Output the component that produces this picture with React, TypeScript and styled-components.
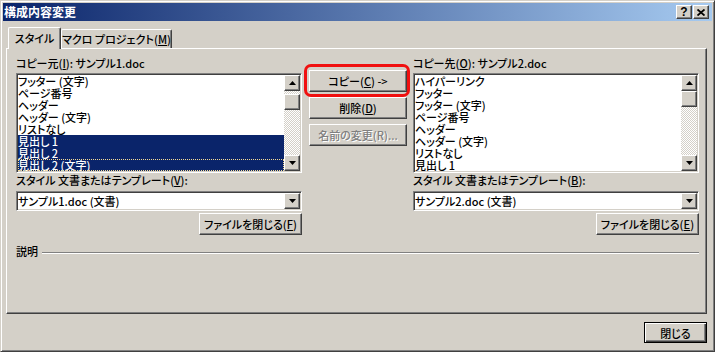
import React from 'react'
import styled, { createGlobalStyle, css } from 'styled-components'

const FACE = '#D4D0C8'
const SHADOW = '#808080'
const DARK = '#404040'
const HILITE = '#FFFFFF'
const NAVY = '#0A246A'

const GlobalStyle = createGlobalStyle`
  html, body {
    margin: 0;
    padding: 0;
    background: ${FACE};
  }
  body {
    font-family: 'Noto Sans CJK JP', 'Noto Sans', sans-serif;
    font-size: 11px;
    font-weight: 500;
    font-feature-settings: 'palt';
    color: #000;
  }
  * {
    box-sizing: border-box;
  }
`

const raised = css`
  border: 1px solid;
  border-color: ${HILITE} ${DARK} ${DARK} ${HILITE};
  box-shadow: inset -1px -1px ${SHADOW};
  background: ${FACE};
`

const sunken = css`
  border: 1px solid;
  border-color: ${SHADOW} ${HILITE} ${HILITE} ${SHADOW};
  box-shadow: inset 1px 1px ${DARK}, inset -1px -1px ${FACE};
  padding: 1px;
`

const Window = styled.div`
  width: 715px;
  height: 352px;
  background: ${FACE};
  border: 1px solid;
  border-color: ${FACE} ${DARK} ${DARK} ${FACE};
  box-shadow: inset 1px 1px ${HILITE}, inset -1px -1px ${SHADOW};
  padding: 2px;
  display: flex;
  flex-direction: column;
`

const TitleBar = styled.div`
  height: 18px;
  display: flex;
  align-items: center;
  padding: 0 3px 0 1px;
  background: linear-gradient(to right, ${NAVY}, #a6caf0);
`

const Title = styled.div`
  flex: 1;
  color: #fff;
  font-weight: bold;
  font-size: 12px;
  line-height: 18px;
  white-space: nowrap;
  font-feature-settings: normal;
`

const CaptionButton = styled.div<{ $gap?: number }>`
  ${raised};
  width: 16px;
  height: 14px;
  margin-left: ${(p) => p.$gap ?? 0}px;
  display: flex;
  align-items: center;
  justify-content: center;
  font-family: 'Liberation Sans', Arial, sans-serif;
  font-weight: bold;
  font-size: 12px;
  line-height: 12px;
`

const Body = styled.div`
  flex: 1;
  display: flex;
  flex-direction: column;
  padding: 6px 5px 0 3px;
`

const TabStrip = styled.div`
  display: flex;
  align-items: flex-end;
  height: 21px;
  padding-left: 2px;
  position: relative;
  z-index: 2;
`

const Tab = styled.div<{ $active?: boolean; $width: number }>`
  flex: none;
  width: ${(p) => p.$width}px;
  height: ${(p) => (p.$active ? 22 : 19)}px;
  margin-bottom: ${(p) => (p.$active ? -1 : 0)}px;
  background: ${FACE};
  border-top: 1px solid ${HILITE};
  border-left: 1px solid ${HILITE};
  border-right: 1px solid ${DARK};
  border-radius: 2px 2px 0 0;
  box-shadow: inset -1px 0 ${SHADOW};
  display: flex;
  justify-content: center;
  align-items: center;
  padding-bottom: ${(p) => (p.$active ? 1 : 0)}px;
  white-space: nowrap;
  line-height: 13px;
`

const Panel = styled.div`
  height: 266px;
  border: 1px solid;
  border-color: ${HILITE} ${DARK} ${DARK} ${HILITE};
  box-shadow: inset -1px -1px ${SHADOW};
  padding: 8px 7px 0 9px;
  position: relative;
  z-index: 1;
  display: flex;
  flex-direction: column;
`

const Columns = styled.div`
  display: flex;
  align-items: flex-start;
`

const Pane = styled.div`
  width: 286px;
  display: flex;
  flex-direction: column;
`

const Label = styled.div<{ $top?: number }>`
  line-height: 13px;
  height: 13px;
  margin-top: ${(p) => p.$top ?? 0}px;
  white-space: nowrap;
`

const U = styled.span`
  text-decoration: underline;
`

const ListBox = styled.div`
  ${sunken};
  margin-top: 3px;
  height: 100px;
  background: #fff;
  display: flex;
`

const Rows = styled.div`
  flex: 1;
  overflow: hidden;
`

const Row = styled.div<{ $selected?: boolean; $focused?: boolean }>`
  height: 12px;
  line-height: 12px;
  white-space: nowrap;
  background: ${(p) => (p.$selected ? NAVY : 'transparent')};
  color: ${(p) => (p.$selected ? '#fff' : '#000')};
  outline: ${(p) => (p.$focused ? '1px dotted #f5db95' : 'none')};
  outline-offset: -1px;
`

const ScrollBar = styled.div`
  width: 16px;
  display: flex;
  flex-direction: column;
`

const ScrollButton = styled.div`
  ${raised};
  width: 16px;
  height: 16px;
  flex: none;
  display: flex;
  align-items: center;
  justify-content: center;
`

const Track = styled.div`
  flex: 1;
  background-color: ${FACE};
  background-image: conic-gradient(#fff 25%, ${FACE} 0 50%, #fff 0 75%, ${FACE} 0);
  background-size: 2px 2px;
`

const Thumb = styled.div<{ $offset: number }>`
  ${raised};
  width: 16px;
  height: 16px;
  margin-top: ${(p) => p.$offset}px;
`

const Combo = styled.div`
  ${sunken};
  margin-top: 4px;
  height: 20px;
  background: #fff;
  display: flex;
  align-items: center;
`

const ComboText = styled.div`
  flex: 1;
  line-height: 16px;
  white-space: nowrap;
`

const Button = styled.div<{ $width: number; $height?: number; $top?: number; $disabled?: boolean }>`
  ${raised};
  width: ${(p) => p.$width}px;
  height: ${(p) => p.$height ?? 22}px;
  margin-top: ${(p) => p.$top ?? 0}px;
  display: flex;
  align-items: center;
  justify-content: center;
  white-space: nowrap;
  color: ${(p) => (p.$disabled ? SHADOW : '#000')};
  text-shadow: ${(p) => (p.$disabled ? '1px 1px #fff' : 'none')};
  position: relative;
`

const RightButton = styled(Button)`
  align-self: flex-end;
`

const Middle = styled.div`
  width: 98px;
  margin: 13px 6px 0 7px;
  display: flex;
  flex-direction: column;
`

const Highlight = styled.div`
  position: absolute;
  top: -7px;
  left: -6px;
  right: -4px;
  bottom: -6px;
  border: 3px solid #f01010;
  border-radius: 7px;
  pointer-events: none;
`

const DescriptionRow = styled.div`
  display: flex;
  align-items: center;
  margin-top: 10px;
  height: 13px;
  line-height: 13px;
`

const Etched = styled.div`
  flex: 1;
  margin: 2px 0 0 4px;
  border-top: 1px solid ${SHADOW};
  border-bottom: 1px solid ${HILITE};
`

const Footer = styled.div`
  display: flex;
  justify-content: flex-end;
  padding-top: 8px;
`

const DefaultButton = styled.div`
  width: 63px;
  height: 21px;
  border: 1px solid #000;
  background: ${FACE};
  box-shadow: inset 1px 1px #fff, inset -1px -1px ${DARK}, inset -2px -2px ${SHADOW};
  display: flex;
  align-items: center;
  justify-content: center;
`

const Arrow = ({ down }: { down?: boolean }) => (
  <svg width="7" height="4" viewBox="0 0 7 4">
    <polygon points={down ? '0,0 7,0 3.5,4' : '3.5,0 7,4 0,4'} fill="#000" />
  </svg>
)

const CloseGlyph = () => (
  <svg width="8" height="7" viewBox="0 0 8 7">
    <path d="M0.5 0.5 L7.5 6.5 M7.5 0.5 L0.5 6.5" stroke="#000" strokeWidth="1.8" />
  </svg>
)

type Item = { label: string; selected?: boolean; focused?: boolean }

const leftItems: Item[] = [
  { label: 'フッター (文字)' },
  { label: 'ページ番号' },
  { label: 'ヘッダー' },
  { label: 'ヘッダー (文字)' },
  { label: 'リストなし' },
  { label: '見出し 1', selected: true },
  { label: '見出し 2', selected: true },
  { label: '見出し 2 (文字)', selected: true, focused: true },
]

const rightItems: Item[] = [
  { label: 'ハイパーリンク' },
  { label: 'フッター' },
  { label: 'フッター (文字)' },
  { label: 'ページ番号' },
  { label: 'ヘッダー' },
  { label: 'ヘッダー (文字)' },
  { label: 'リストなし' },
  { label: '見出し 1' },
]

interface StyleListProps {
  items: Item[]
  thumbOffset: number
}

const StyleList = ({ items, thumbOffset }: StyleListProps) => (
  <ListBox>
    <Rows>
      {items.map((item) => (
        <Row key={item.label} $selected={item.selected} $focused={item.focused}>
          {item.label}
        </Row>
      ))}
    </Rows>
    <ScrollBar>
      <ScrollButton>
        <Arrow />
      </ScrollButton>
      <Track>
        <Thumb $offset={thumbOffset} />
      </Track>
      <ScrollButton>
        <Arrow down />
      </ScrollButton>
    </ScrollBar>
  </ListBox>
)

interface PaneProps {
  heading: React.ReactNode
  items: Item[]
  thumbOffset: number
  templateKey: string
  file: string
  closeKey: string
}

const StylePane = ({ heading, items, thumbOffset, templateKey, file, closeKey }: PaneProps) => (
  <Pane>
    <Label>{heading}</Label>
    <StyleList items={items} thumbOffset={thumbOffset} />
    <Label $top={1}>
      スタイル 文書またはテンプレート(<U>{templateKey}</U>):
    </Label>
    <Combo>
      <ComboText>{file}</ComboText>
      <ScrollButton>
        <Arrow down />
      </ScrollButton>
    </Combo>
    <RightButton $width={103} $top={2}>
      ファイルを閉じる(<U>{closeKey}</U>)
    </RightButton>
  </Pane>
)

export default function App() {
  return (
    <>
      <GlobalStyle />
      <Window>
        <TitleBar>
          <Title>構成内容変更</Title>
          <CaptionButton>?</CaptionButton>
          <CaptionButton $gap={1}>
            <CloseGlyph />
          </CaptionButton>
        </TitleBar>
        <Body>
          <TabStrip>
            <Tab $active $width={53}>
              スタイル
            </Tab>
            <Tab $width={111}>
              マクロ プロジェクト(<U>M</U>)
            </Tab>
          </TabStrip>
          <Panel>
            <Columns>
              <StylePane
                heading={
                  <>
                    コピー元(<U>I</U>): サンプル1.doc
                  </>
                }
                items={leftItems}
                thumbOffset={3}
                templateKey="V"
                file="サンプル1.doc (文書)"
                closeKey="F"
              />
              <Middle>
                <Button $width={98}>
                  コピー(<U>C</U>) -&gt;
                  <Highlight />
                </Button>
                <Button $width={98} $top={5}>
                  削除(<U>D</U>)
                </Button>
                <Button $width={98} $top={5} $disabled>
                  名前の変更(R)...
                </Button>
              </Middle>
              <StylePane
                heading={
                  <>
                    コピー先(<U>O</U>): サンプル2.doc
                  </>
                }
                items={rightItems}
                thumbOffset={0}
                templateKey="B"
                file="サンプル2.doc (文書)"
                closeKey="E"
              />
            </Columns>
            <DescriptionRow>
              説明
              <Etched />
            </DescriptionRow>
          </Panel>
          <Footer>
            <DefaultButton>閉じる</DefaultButton>
          </Footer>
        </Body>
      </Window>
    </>
  )
}
